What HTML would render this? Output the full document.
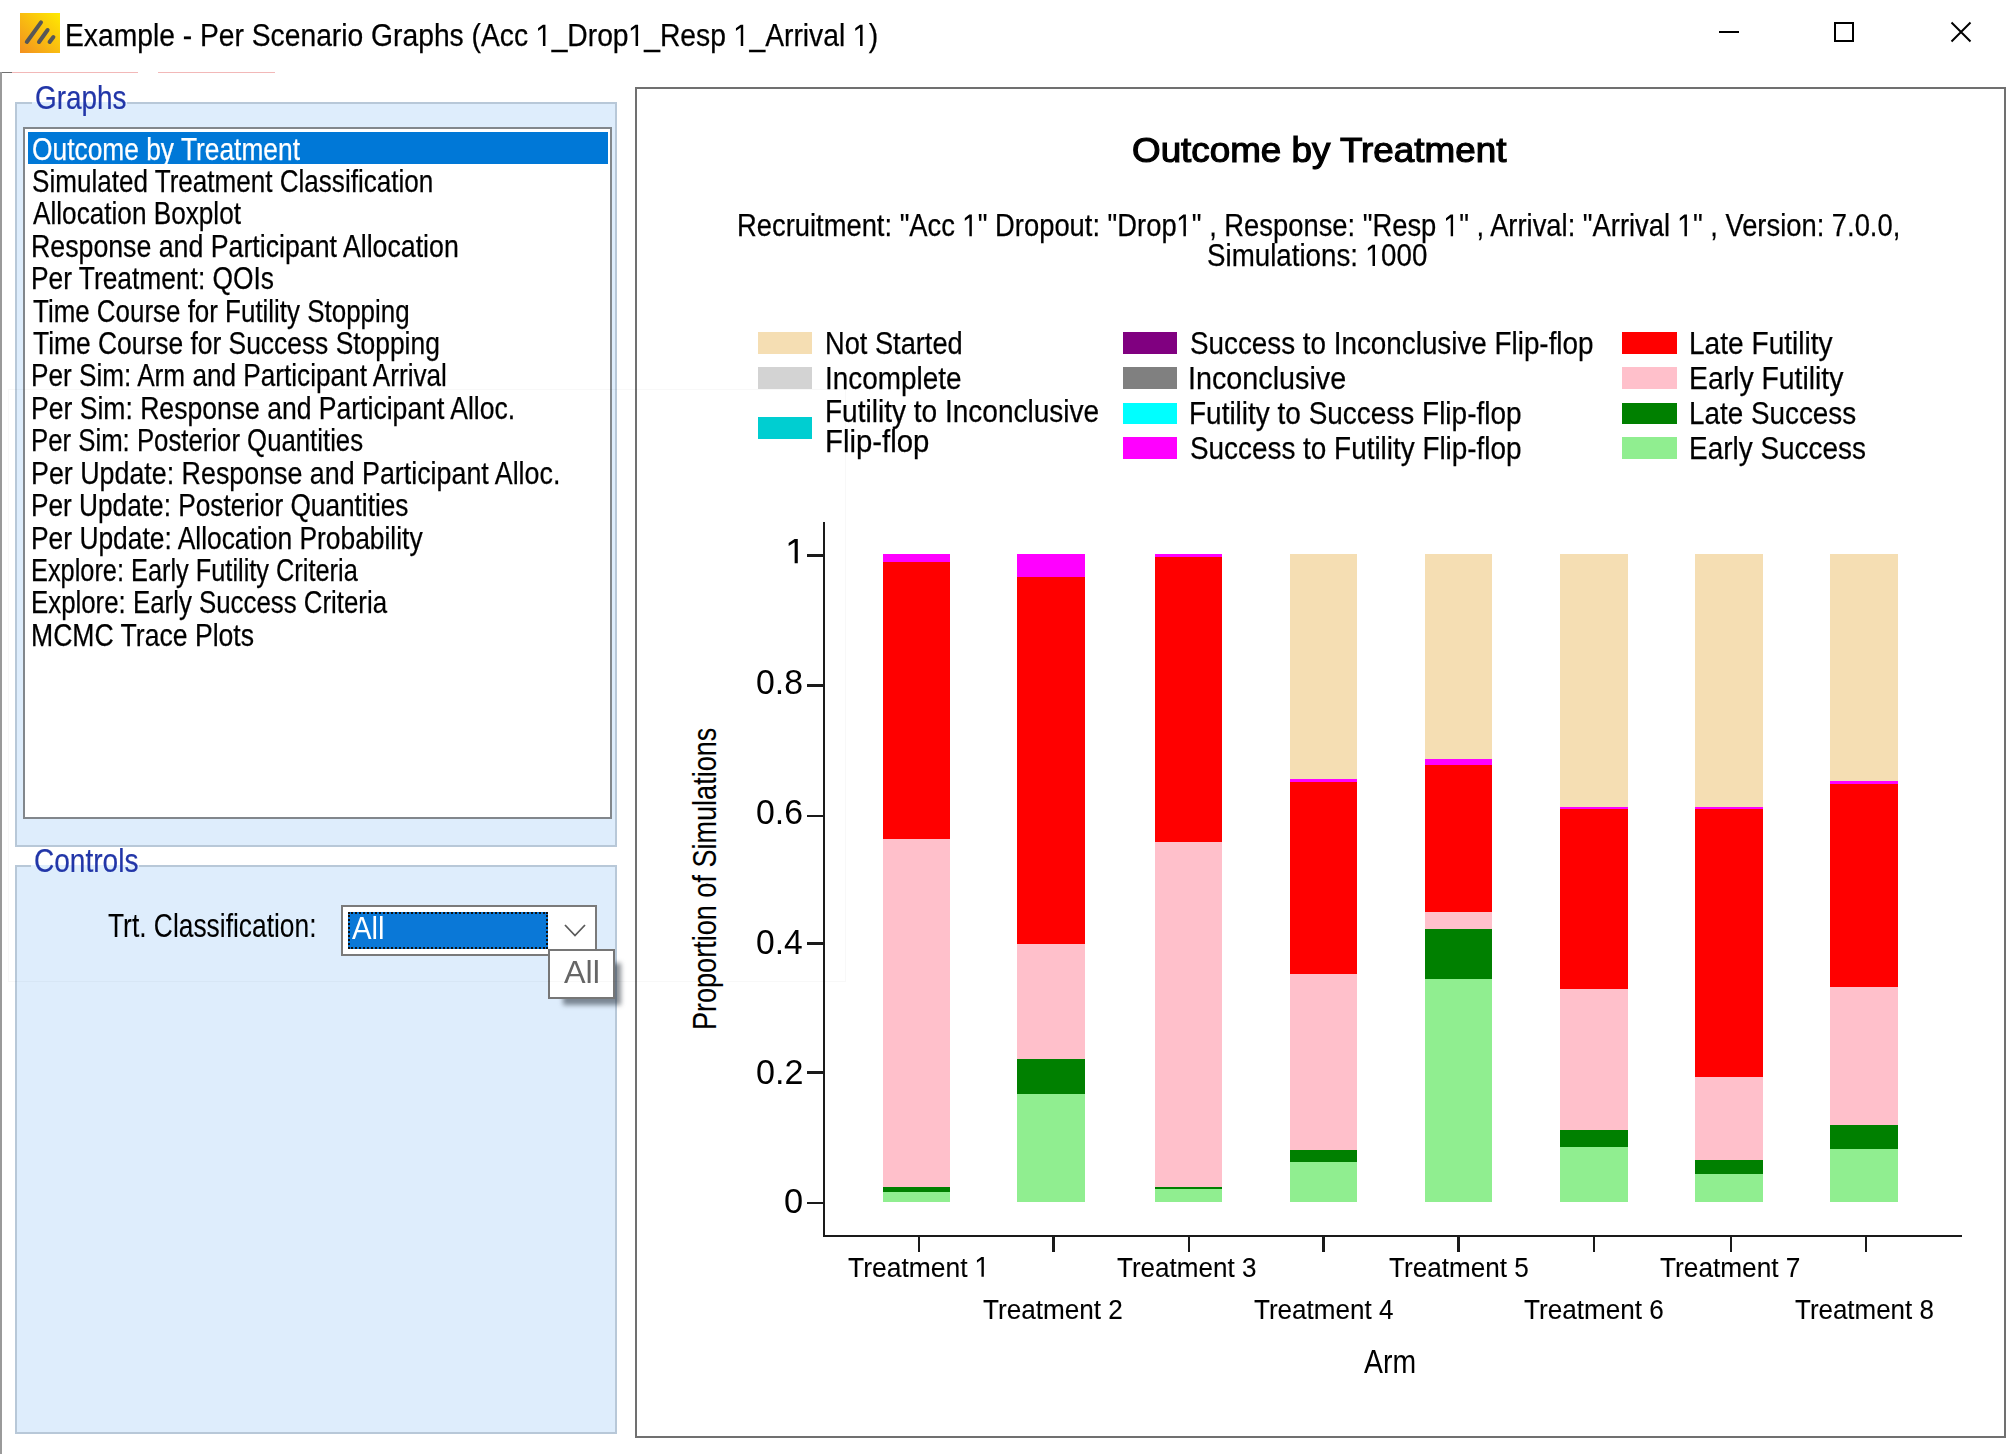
<!DOCTYPE html>
<html><head><meta charset="utf-8"><style>
html,body{margin:0;padding:0;background:#fff;width:2007px;height:1454px;overflow:hidden;position:relative}
.t{position:absolute;white-space:nowrap;transform-origin:0 0;font-family:"Liberation Sans",sans-serif}
.o1{position:relative;color:transparent;-webkit-text-stroke:0}
.o1::before{content:"";position:absolute;left:-0.01em;top:0;width:0.556em;height:0.95em;background:var(--c);clip-path:polygon(0.2578em 0.905em,0.2578em 0.300em,0.0862em 0.412em,0.0862em 0.322em,0.2548em 0.207em,0.3478em 0.207em,0.3478em 0.905em)}
</style></head><body>
<svg style="position:absolute;left:20px;top:13px" width="40" height="40" viewBox="0 0 40 40">
<defs><linearGradient id="ig" x1="1" y1="0" x2="0" y2="1"><stop offset="0" stop-color="#ffea00"/><stop offset="1" stop-color="#f39020"/></linearGradient></defs>
<rect width="40" height="40" fill="url(#ig)"/>
<g stroke="#575757" stroke-width="4" stroke-linecap="round"><line x1="6.8" y1="29" x2="21" y2="9.3"/><line x1="19" y1="29" x2="27.6" y2="17"/><line x1="29.6" y1="29" x2="33.4" y2="24"/></g>
</svg>
<div class="t" style="left:65.24px;top:20.43px;font-size:30.43px;line-height:30.43px;transform:scaleX(0.9284);color:#000;--c:#000;-webkit-text-stroke:0.25px currentColor;">Example - Per Scenario Graphs (Acc <span class="o1">1</span>_Drop<span class="o1">1</span>_Resp <span class="o1">1</span>_Arrival <span class="o1">1</span>)</div>
<div style="position:absolute;left:1719.00px;top:31.00px;width:20.00px;height:2.00px;background:#000"></div>
<div style="position:absolute;left:1834.00px;top:22.00px;width:20.00px;height:20.00px;border:2px solid #000;box-sizing:border-box"></div>
<svg style="position:absolute;left:1950px;top:21px" width="22" height="22" viewBox="0 0 22 22"><path d="M1.5 1.5 L20.5 20.5 M20.5 1.5 L1.5 20.5" stroke="#000" stroke-width="2"/></svg>
<div style="position:absolute;left:0.00px;top:71.50px;width:12.00px;height:1.50px;background:#707070"></div>
<div style="position:absolute;left:12.00px;top:71.80px;width:125.50px;height:1.20px;background:#f2b8b8"></div>
<div style="position:absolute;left:157.50px;top:71.80px;width:117.50px;height:1.20px;background:#f2b8b8"></div>
<div style="position:absolute;left:0.00px;top:72.00px;width:1.60px;height:1382.00px;background:#9a9a9a"></div>
<div style="position:absolute;left:15.00px;top:102.00px;width:602.00px;height:745.00px;background:#deedfc;border:2px solid #b8c8d8;border-top:none;box-sizing:border-box"></div>
<div style="position:absolute;left:15.00px;top:102.00px;width:17.00px;height:2.00px;background:#b8c8d8"></div>
<div style="position:absolute;left:126.50px;top:102.00px;width:490.50px;height:2.00px;background:#b8c8d8"></div>
<div class="t" style="left:35.00px;top:82.31px;font-size:32.46px;line-height:32.46px;transform:scaleX(0.8600);color:#2236a8;--c:#2236a8;-webkit-text-stroke:0.2px #2236a8;">Graphs</div>
<div style="position:absolute;left:23.00px;top:127.00px;width:589.00px;height:692.00px;background:#fff;border:2px solid #82878c;box-sizing:border-box"></div>
<div style="position:absolute;left:27.50px;top:131.70px;width:580.00px;height:32.50px;background:#0078d7"></div>
<div class="t" style="left:32.11px;top:134.59px;font-size:30.72px;line-height:30.72px;transform:scaleX(0.8577);color:#fff;--c:#fff;-webkit-text-stroke:0.25px currentColor;">Outcome by Treatment</div>
<div class="t" style="left:32.13px;top:167.00px;font-size:30.72px;line-height:30.72px;transform:scaleX(0.8485);color:#000;--c:#000;-webkit-text-stroke:0.25px currentColor;">Simulated Treatment Classification</div>
<div class="t" style="left:33.30px;top:199.41px;font-size:30.72px;line-height:30.72px;transform:scaleX(0.8518);color:#000;--c:#000;-webkit-text-stroke:0.25px currentColor;">Allocation Boxplot</div>
<div class="t" style="left:31.16px;top:231.82px;font-size:30.72px;line-height:30.72px;transform:scaleX(0.8698);color:#000;--c:#000;-webkit-text-stroke:0.25px currentColor;">Response and Participant Allocation</div>
<div class="t" style="left:31.19px;top:264.23px;font-size:30.72px;line-height:30.72px;transform:scaleX(0.8574);color:#000;--c:#000;-webkit-text-stroke:0.25px currentColor;">Per Treatment: QOIs</div>
<div class="t" style="left:32.78px;top:296.64px;font-size:30.72px;line-height:30.72px;transform:scaleX(0.8441);color:#000;--c:#000;-webkit-text-stroke:0.25px currentColor;">Time Course for Futility Stopping</div>
<div class="t" style="left:32.77px;top:329.05px;font-size:30.72px;line-height:30.72px;transform:scaleX(0.8592);color:#000;--c:#000;-webkit-text-stroke:0.25px currentColor;">Time Course for Success Stopping</div>
<div class="t" style="left:31.21px;top:361.46px;font-size:30.72px;line-height:30.72px;transform:scaleX(0.8518);color:#000;--c:#000;-webkit-text-stroke:0.25px currentColor;">Per Sim: Arm and Participant Arrival</div>
<div class="t" style="left:31.18px;top:393.87px;font-size:30.72px;line-height:30.72px;transform:scaleX(0.8645);color:#000;--c:#000;-webkit-text-stroke:0.25px currentColor;">Per Sim: Response and Participant Alloc.</div>
<div class="t" style="left:31.24px;top:426.28px;font-size:30.72px;line-height:30.72px;transform:scaleX(0.8384);color:#000;--c:#000;-webkit-text-stroke:0.25px currentColor;">Per Sim: Posterior Quantities</div>
<div class="t" style="left:31.15px;top:458.69px;font-size:30.72px;line-height:30.72px;transform:scaleX(0.8732);color:#000;--c:#000;-webkit-text-stroke:0.25px currentColor;">Per Update: Response and Participant Alloc.</div>
<div class="t" style="left:31.20px;top:491.10px;font-size:30.72px;line-height:30.72px;transform:scaleX(0.8536);color:#000;--c:#000;-webkit-text-stroke:0.25px currentColor;">Per Update: Posterior Quantities</div>
<div class="t" style="left:31.19px;top:523.51px;font-size:30.72px;line-height:30.72px;transform:scaleX(0.8589);color:#000;--c:#000;-webkit-text-stroke:0.25px currentColor;">Per Update: Allocation Probability</div>
<div class="t" style="left:31.27px;top:555.92px;font-size:30.72px;line-height:30.72px;transform:scaleX(0.8250);color:#000;--c:#000;-webkit-text-stroke:0.25px currentColor;">Explore: Early Futility Criteria</div>
<div class="t" style="left:31.23px;top:588.33px;font-size:30.72px;line-height:30.72px;transform:scaleX(0.8410);color:#000;--c:#000;-webkit-text-stroke:0.25px currentColor;">Explore: Early Success Criteria</div>
<div class="t" style="left:31.17px;top:620.74px;font-size:30.72px;line-height:30.72px;transform:scaleX(0.8653);color:#000;--c:#000;-webkit-text-stroke:0.25px currentColor;">MCMC Trace Plots</div>
<div style="position:absolute;left:15.00px;top:865.00px;width:602.00px;height:569.00px;background:#deedfc;border:2px solid #b8c8d8;border-top:none;box-sizing:border-box"></div>
<div style="position:absolute;left:15.00px;top:865.00px;width:16.00px;height:2.00px;background:#b8c8d8"></div>
<div style="position:absolute;left:139.30px;top:865.00px;width:477.70px;height:2.00px;background:#b8c8d8"></div>
<div class="t" style="left:34.10px;top:844.79px;font-size:32.61px;line-height:32.61px;transform:scaleX(0.8602);color:#2236a8;--c:#2236a8;-webkit-text-stroke:0.2px #2236a8;">Controls</div>
<div class="t" style="left:107.97px;top:910.47px;font-size:32.75px;line-height:32.75px;transform:scaleX(0.8049);color:#000;--c:#000;-webkit-text-stroke:0.1px #000;">Trt. Classification:</div>
<div style="position:absolute;left:340.50px;top:905.00px;width:256.50px;height:51.00px;background:#fff;border:2px solid #7a7a7a;box-sizing:border-box"></div>
<div style="position:absolute;left:347.50px;top:912.00px;width:200.00px;height:37.00px;background:#0a78d7;outline:2px dotted #111;outline-offset:-2px"></div>
<div class="t" style="left:352.40px;top:913.03px;font-size:30.43px;line-height:30.43px;transform:scaleX(0.9621);color:#fff;--c:#fff;">All</div>
<svg style="position:absolute;left:563px;top:923px" width="24" height="16" viewBox="0 0 24 16"><path d="M2 2 L12 12.5 L22 2" fill="none" stroke="#5a5a5a" stroke-width="1.8"/></svg>
<div style="position:absolute;left:563.00px;top:963.00px;width:58.00px;height:42.00px;background:rgba(40,50,60,0.55);filter:blur(2.5px)"></div>
<div style="position:absolute;left:548.30px;top:949.20px;width:67.20px;height:49.60px;background:#fff;border:2px solid #767676;box-sizing:border-box"></div>
<div class="t" style="left:563.50px;top:957.49px;font-size:31.30px;line-height:31.30px;transform:scaleX(1.0332);color:#666;--c:#666;">All</div>
<div style="position:absolute;left:635.00px;top:87.00px;width:1370.50px;height:1350.50px;background:#fff;border:2px solid #707070;box-sizing:border-box"></div>
<div class="t" style="left:1132.34px;top:132.92px;font-size:34.35px;line-height:34.35px;transform:scaleX(1.0722);color:#000;--c:#000;-webkit-text-stroke:0.25px currentColor;-webkit-text-stroke:1.15px #000;">Outcome by Treatment</div>
<div class="t" style="left:737.11px;top:210.12px;font-size:31.16px;line-height:31.16px;transform:scaleX(0.8780);color:#000;--c:#000;-webkit-text-stroke:0.25px currentColor;">Recruitment: "Acc <span class="o1">1</span>" Dropout: "Drop<span class="o1">1</span>" , Response: "Resp <span class="o1">1</span>" , Arrival: "Arrival <span class="o1">1</span>" , Version: 7.0.0,</div>
<div class="t" style="left:1207.25px;top:240.43px;font-size:30.43px;line-height:30.43px;transform:scaleX(0.9110);color:#000;--c:#000;-webkit-text-stroke:0.25px currentColor;">Simulations: <span class="o1">1</span>000</div>
<div style="position:absolute;left:758.00px;top:332.20px;width:54.30px;height:22.00px;background:#f5deb3"></div>
<div class="t" style="left:825.12px;top:328.40px;font-size:31.88px;line-height:31.88px;transform:scaleX(0.8540);color:#000;--c:#000;-webkit-text-stroke:0.25px currentColor;">Not Started</div>
<div style="position:absolute;left:758.00px;top:367.30px;width:54.30px;height:21.90px;background:#d3d3d3"></div>
<div class="t" style="left:824.79px;top:363.40px;font-size:31.88px;line-height:31.88px;transform:scaleX(0.8753);color:#000;--c:#000;-webkit-text-stroke:0.25px currentColor;">Incomplete</div>
<div style="position:absolute;left:758.00px;top:417.00px;width:54.30px;height:22.00px;background:#00ced1"></div>
<div class="t" style="left:825.06px;top:395.80px;font-size:31.88px;line-height:31.88px;transform:scaleX(0.8794);color:#000;--c:#000;-webkit-text-stroke:0.25px currentColor;">Futility to Inconclusive</div>
<div class="t" style="left:824.95px;top:425.70px;font-size:31.88px;line-height:31.88px;transform:scaleX(0.9195);color:#000;--c:#000;-webkit-text-stroke:0.25px currentColor;">Flip-flop</div>
<div style="position:absolute;left:1122.50px;top:332.20px;width:54.90px;height:22.00px;background:#800080"></div>
<div class="t" style="left:1189.55px;top:328.40px;font-size:31.88px;line-height:31.88px;transform:scaleX(0.8726);color:#000;--c:#000;-webkit-text-stroke:0.25px currentColor;">Success to Inconclusive Flip-flop</div>
<div style="position:absolute;left:1122.50px;top:367.30px;width:54.90px;height:21.90px;background:#808080"></div>
<div class="t" style="left:1188.21px;top:363.40px;font-size:31.88px;line-height:31.88px;transform:scaleX(0.9014);color:#000;--c:#000;-webkit-text-stroke:0.25px currentColor;">Inconclusive</div>
<div style="position:absolute;left:1122.50px;top:402.50px;width:54.90px;height:21.70px;background:#00ffff"></div>
<div class="t" style="left:1188.56px;top:398.40px;font-size:31.88px;line-height:31.88px;transform:scaleX(0.8772);color:#000;--c:#000;-webkit-text-stroke:0.25px currentColor;">Futility to Success Flip-flop</div>
<div style="position:absolute;left:1122.50px;top:437.00px;width:54.90px;height:22.00px;background:#ff00ff"></div>
<div class="t" style="left:1189.55px;top:433.20px;font-size:31.88px;line-height:31.88px;transform:scaleX(0.8746);color:#000;--c:#000;-webkit-text-stroke:0.25px currentColor;">Success to Futility Flip-flop</div>
<div style="position:absolute;left:1622.40px;top:332.20px;width:55.00px;height:22.00px;background:#ff0000"></div>
<div class="t" style="left:1689.25px;top:328.40px;font-size:31.88px;line-height:31.88px;transform:scaleX(0.8814);color:#000;--c:#000;-webkit-text-stroke:0.25px currentColor;">Late Futility</div>
<div style="position:absolute;left:1622.40px;top:367.30px;width:55.00px;height:21.90px;background:#ffc0cb"></div>
<div class="t" style="left:1689.23px;top:363.40px;font-size:31.88px;line-height:31.88px;transform:scaleX(0.8892);color:#000;--c:#000;-webkit-text-stroke:0.25px currentColor;">Early Futility</div>
<div style="position:absolute;left:1622.40px;top:402.50px;width:55.00px;height:21.70px;background:#008000"></div>
<div class="t" style="left:1689.27px;top:398.40px;font-size:31.88px;line-height:31.88px;transform:scaleX(0.8738);color:#000;--c:#000;-webkit-text-stroke:0.25px currentColor;">Late Success</div>
<div style="position:absolute;left:1622.40px;top:437.00px;width:55.00px;height:22.00px;background:#90ee90"></div>
<div class="t" style="left:1689.26px;top:433.20px;font-size:31.88px;line-height:31.88px;transform:scaleX(0.8764);color:#000;--c:#000;-webkit-text-stroke:0.25px currentColor;">Early Success</div>
<div style="position:absolute;left:822.50px;top:522.00px;width:2.50px;height:715.00px;background:#1a1a1a"></div>
<div style="position:absolute;left:822.50px;top:1234.50px;width:1139.50px;height:2.50px;background:#1a1a1a"></div>
<div style="position:absolute;left:807.30px;top:554.25px;width:15.70px;height:2.50px;background:#1a1a1a"></div>
<div class="t" style="left:785.64px;top:533.75px;font-size:34.78px;line-height:34.78px;transform:scaleX(1.0030);color:#000;--c:#000;"><span class="o1">1</span></div>
<div style="position:absolute;left:807.30px;top:684.25px;width:15.70px;height:2.50px;background:#1a1a1a"></div>
<div class="t" style="left:756.35px;top:664.75px;font-size:34.78px;line-height:34.78px;transform:scaleX(0.9722);color:#000;--c:#000;">0.8</div>
<div style="position:absolute;left:807.30px;top:814.55px;width:15.70px;height:2.50px;background:#1a1a1a"></div>
<div class="t" style="left:756.35px;top:794.75px;font-size:34.78px;line-height:34.78px;transform:scaleX(0.9722);color:#000;--c:#000;">0.6</div>
<div style="position:absolute;left:807.30px;top:942.05px;width:15.70px;height:2.50px;background:#1a1a1a"></div>
<div class="t" style="left:756.25px;top:924.55px;font-size:34.78px;line-height:34.78px;transform:scaleX(0.9670);color:#000;--c:#000;">0.4</div>
<div style="position:absolute;left:807.30px;top:1071.45px;width:15.70px;height:2.50px;background:#1a1a1a"></div>
<div class="t" style="left:756.23px;top:1054.55px;font-size:34.78px;line-height:34.78px;transform:scaleX(0.9819);color:#000;--c:#000;">0.2</div>
<div style="position:absolute;left:807.30px;top:1201.75px;width:15.70px;height:2.50px;background:#1a1a1a"></div>
<div class="t" style="left:784.12px;top:1184.05px;font-size:34.78px;line-height:34.78px;transform:scaleX(0.9883);color:#000;--c:#000;">0</div>
<div style="position:absolute;left:917.55px;top:1237.00px;width:2.50px;height:15.00px;background:#1a1a1a"></div>
<div class="t" style="left:847.67px;top:1253.07px;font-size:28.26px;line-height:28.26px;transform:scaleX(0.9362);color:#000;--c:#000;-webkit-text-stroke:0.1px #000;">Treatment <span class="o1">1</span></div>
<div style="position:absolute;left:1052.15px;top:1237.00px;width:2.50px;height:15.00px;background:#1a1a1a"></div>
<div class="t" style="left:982.68px;top:1295.07px;font-size:28.26px;line-height:28.26px;transform:scaleX(0.9246);color:#000;--c:#000;-webkit-text-stroke:0.1px #000;">Treatment 2</div>
<div style="position:absolute;left:1187.55px;top:1237.00px;width:2.50px;height:15.00px;background:#1a1a1a"></div>
<div class="t" style="left:1117.38px;top:1253.07px;font-size:28.26px;line-height:28.26px;transform:scaleX(0.9222);color:#000;--c:#000;-webkit-text-stroke:0.1px #000;">Treatment 3</div>
<div style="position:absolute;left:1322.45px;top:1237.00px;width:2.50px;height:15.00px;background:#1a1a1a"></div>
<div class="t" style="left:1254.48px;top:1295.07px;font-size:28.26px;line-height:28.26px;transform:scaleX(0.9218);color:#000;--c:#000;-webkit-text-stroke:0.1px #000;">Treatment 4</div>
<div style="position:absolute;left:1457.25px;top:1237.00px;width:2.50px;height:15.00px;background:#1a1a1a"></div>
<div class="t" style="left:1389.18px;top:1253.07px;font-size:28.26px;line-height:28.26px;transform:scaleX(0.9242);color:#000;--c:#000;-webkit-text-stroke:0.1px #000;">Treatment 5</div>
<div style="position:absolute;left:1592.65px;top:1237.00px;width:2.50px;height:15.00px;background:#1a1a1a"></div>
<div class="t" style="left:1524.48px;top:1295.07px;font-size:28.26px;line-height:28.26px;transform:scaleX(0.9242);color:#000;--c:#000;-webkit-text-stroke:0.1px #000;">Treatment 6</div>
<div style="position:absolute;left:1729.65px;top:1237.00px;width:2.50px;height:15.00px;background:#1a1a1a"></div>
<div class="t" style="left:1659.78px;top:1253.07px;font-size:28.26px;line-height:28.26px;transform:scaleX(0.9286);color:#000;--c:#000;-webkit-text-stroke:0.1px #000;">Treatment 7</div>
<div style="position:absolute;left:1864.95px;top:1237.00px;width:2.50px;height:15.00px;background:#1a1a1a"></div>
<div class="t" style="left:1795.08px;top:1295.07px;font-size:28.26px;line-height:28.26px;transform:scaleX(0.9182);color:#000;--c:#000;-webkit-text-stroke:0.1px #000;">Treatment 8</div>
<div class="t" style="left:0;top:0;font-size:33.04px;line-height:33.04px;transform:translate(687.72px,1030.07px) rotate(-90deg) scaleX(0.8195);color:#000;-webkit-text-stroke:0.1px #000">Proportion of Simulations</div>
<div class="t" style="left:1364.40px;top:1346.31px;font-size:32.46px;line-height:32.46px;transform:scaleX(0.8754);color:#000;--c:#000;">Arm</div>
<div style="position:absolute;left:882.50px;top:554.40px;width:67.50px;height:647.30px;background:#ff00ff"></div>
<div style="position:absolute;left:882.50px;top:561.50px;width:67.50px;height:640.20px;background:#ff0000"></div>
<div style="position:absolute;left:882.50px;top:839.00px;width:67.50px;height:362.70px;background:#ffc0cb"></div>
<div style="position:absolute;left:882.50px;top:1186.90px;width:67.50px;height:14.80px;background:#008000"></div>
<div style="position:absolute;left:882.50px;top:1192.10px;width:67.50px;height:9.60px;background:#90ee90"></div>
<div style="position:absolute;left:1017.40px;top:554.40px;width:67.50px;height:647.30px;background:#ff00ff"></div>
<div style="position:absolute;left:1017.40px;top:576.80px;width:67.50px;height:624.90px;background:#ff0000"></div>
<div style="position:absolute;left:1017.40px;top:944.10px;width:67.50px;height:257.60px;background:#ffc0cb"></div>
<div style="position:absolute;left:1017.40px;top:1059.40px;width:67.50px;height:142.30px;background:#008000"></div>
<div style="position:absolute;left:1017.40px;top:1094.40px;width:67.50px;height:107.30px;background:#90ee90"></div>
<div style="position:absolute;left:1154.90px;top:554.40px;width:67.50px;height:647.30px;background:#ff00ff"></div>
<div style="position:absolute;left:1154.90px;top:556.70px;width:67.50px;height:645.00px;background:#ff0000"></div>
<div style="position:absolute;left:1154.90px;top:841.80px;width:67.50px;height:359.90px;background:#ffc0cb"></div>
<div style="position:absolute;left:1154.90px;top:1186.90px;width:67.50px;height:14.80px;background:#008000"></div>
<div style="position:absolute;left:1154.90px;top:1189.30px;width:67.50px;height:12.40px;background:#90ee90"></div>
<div style="position:absolute;left:1289.90px;top:554.40px;width:67.50px;height:647.30px;background:#f5deb3"></div>
<div style="position:absolute;left:1289.90px;top:779.20px;width:67.50px;height:422.50px;background:#ff00ff"></div>
<div style="position:absolute;left:1289.90px;top:781.70px;width:67.50px;height:420.00px;background:#ff0000"></div>
<div style="position:absolute;left:1289.90px;top:974.10px;width:67.50px;height:227.60px;background:#ffc0cb"></div>
<div style="position:absolute;left:1289.90px;top:1149.90px;width:67.50px;height:51.80px;background:#008000"></div>
<div style="position:absolute;left:1289.90px;top:1161.50px;width:67.50px;height:40.20px;background:#90ee90"></div>
<div style="position:absolute;left:1424.80px;top:554.40px;width:67.50px;height:647.30px;background:#f5deb3"></div>
<div style="position:absolute;left:1424.80px;top:758.80px;width:67.50px;height:442.90px;background:#ff00ff"></div>
<div style="position:absolute;left:1424.80px;top:764.50px;width:67.50px;height:437.20px;background:#ff0000"></div>
<div style="position:absolute;left:1424.80px;top:912.00px;width:67.50px;height:289.70px;background:#ffc0cb"></div>
<div style="position:absolute;left:1424.80px;top:929.20px;width:67.50px;height:272.50px;background:#008000"></div>
<div style="position:absolute;left:1424.80px;top:979.10px;width:67.50px;height:222.60px;background:#90ee90"></div>
<div style="position:absolute;left:1560.20px;top:554.40px;width:67.50px;height:647.30px;background:#f5deb3"></div>
<div style="position:absolute;left:1560.20px;top:806.50px;width:67.50px;height:395.20px;background:#ff00ff"></div>
<div style="position:absolute;left:1560.20px;top:809.00px;width:67.50px;height:392.70px;background:#ff0000"></div>
<div style="position:absolute;left:1560.20px;top:988.90px;width:67.50px;height:212.80px;background:#ffc0cb"></div>
<div style="position:absolute;left:1560.20px;top:1129.50px;width:67.50px;height:72.20px;background:#008000"></div>
<div style="position:absolute;left:1560.20px;top:1146.70px;width:67.50px;height:55.00px;background:#90ee90"></div>
<div style="position:absolute;left:1695.20px;top:554.40px;width:67.50px;height:647.30px;background:#f5deb3"></div>
<div style="position:absolute;left:1695.20px;top:806.50px;width:67.50px;height:395.20px;background:#ff00ff"></div>
<div style="position:absolute;left:1695.20px;top:809.00px;width:67.50px;height:392.70px;background:#ff0000"></div>
<div style="position:absolute;left:1695.20px;top:1077.00px;width:67.50px;height:124.70px;background:#ffc0cb"></div>
<div style="position:absolute;left:1695.20px;top:1159.60px;width:67.50px;height:42.10px;background:#008000"></div>
<div style="position:absolute;left:1695.20px;top:1174.30px;width:67.50px;height:27.40px;background:#90ee90"></div>
<div style="position:absolute;left:1830.00px;top:554.40px;width:67.50px;height:647.30px;background:#f5deb3"></div>
<div style="position:absolute;left:1830.00px;top:781.40px;width:67.50px;height:420.30px;background:#ff00ff"></div>
<div style="position:absolute;left:1830.00px;top:784.30px;width:67.50px;height:417.40px;background:#ff0000"></div>
<div style="position:absolute;left:1830.00px;top:986.70px;width:67.50px;height:215.00px;background:#ffc0cb"></div>
<div style="position:absolute;left:1830.00px;top:1124.50px;width:67.50px;height:77.20px;background:#008000"></div>
<div style="position:absolute;left:1830.00px;top:1149.40px;width:67.50px;height:52.30px;background:#90ee90"></div>
<div style="position:absolute;left:8.00px;top:389.00px;width:838.00px;height:593.00px;border:1px solid rgba(0,0,0,0.028);box-sizing:border-box"></div>
</body></html>
